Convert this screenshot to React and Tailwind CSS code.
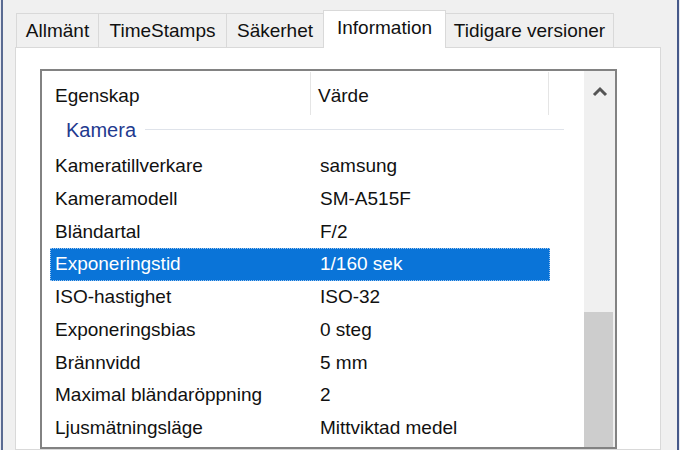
import React from 'react'

const TABS = [
  { label: 'Allmänt', w: 'w-[83px]' },
  { label: 'TimeStamps', w: 'w-[129px]' },
  { label: 'Säkerhet', w: 'w-[98px]' },
  { label: 'Information', w: 'w-[123px]', active: true },
  { label: 'Tidigare versioner', w: 'w-[169px]' },
]

const ROWS = [
  ['Kameratillverkare', 'samsung'],
  ['Kameramodell', 'SM-A515F'],
  ['Bländartal', 'F/2'],
  ['Exponeringstid', '1/160 sek'],
  ['ISO-hastighet', 'ISO-32'],
  ['Exponeringsbias', '0 steg'],
  ['Brännvidd', '5 mm'],
  ['Maximal bländaröppning', '2'],
  ['Ljusmätningsläge', 'Mittviktad medel'],
]

const SELECTED = 3

export default function App() {
  return (
    <div
      className="w-[680px] h-[450px] flex bg-[#f0f0f0] overflow-hidden text-[#111]"
      style={{ fontFamily: '"Liberation Sans", Arial, sans-serif' }}
    >
      {/* window frame, left */}
      <div className="w-[1px] bg-[#e8eaf0]" />
      <div className="w-[2px] bg-[#5a6b92]" />

      <div className="flex-1 flex flex-col pl-[12px] pr-[16px] pt-[10px]">
        {/* Tabs */}
        <div className="flex items-end h-[37px] pl-[1px] relative z-10">
          {TABS.map((t, i) => (
            <div
              key={t.label}
              className={`${t.w} flex items-center justify-center text-[19px] border border-b-0 border-[#d9d9d9] ${
                i > 0 ? '-ml-px' : ''
              } ${
                t.active
                  ? 'h-[38px] -mb-px bg-white relative z-10 pb-[3px]'
                  : 'h-[34px] bg-[#f0f0f0] pt-[2px]'
              }`}
            >
              {t.label}
            </div>
          ))}
        </div>

        {/* Panel */}
        <div className="flex-1 bg-white border border-[#d9d9d9] pt-[21px] pl-[24px] pr-[43px]">
          <div className="h-full border-2 border-[#828282] flex overflow-hidden">
            <div className="flex-1 flex flex-col text-[19px]">
              {/* Column header */}
              <div className="h-[46px] flex items-center pt-[4px]">
                <div className="w-[268px] pl-[13px]">Egenskap</div>
                <div className="w-px h-[43px] bg-[#e5e5e5] self-start -mt-[3px]" />
                <div className="w-[237px] pl-[7px]">Värde</div>
                <div className="w-px h-[43px] bg-[#e5e5e5] self-start -mt-[3px]" />
              </div>

              {/* Group header */}
              <div className="h-[30px] flex items-center pl-[24px] pr-[20px] pb-[4px]">
                <span className="text-[20px] text-[#1f3a8f]">Kamera</span>
                <div className="flex-1 h-px bg-[#dfe3ea] ml-[9px] -mt-[1px]" />
              </div>

              {/* Rows */}
              <div className="pl-[8px] pt-[3px]">
                {ROWS.map(([name, value], i) => {
                  const sel = i === SELECTED
                  return (
                    <div
                      key={name}
                      className={`w-[500px] h-[32.75px] flex items-center ${
                        sel ? 'bg-[#0a74d8] text-white outline-1 outline-dotted outline-[#9ec6f0] -outline-offset-1' : ''
                      }`}
                    >
                      <div className="w-[262px] pl-[5px] whitespace-nowrap">{name}</div>
                      <div className="pl-[8px] whitespace-nowrap">{value}</div>
                    </div>
                  )
                })}
              </div>
            </div>

            {/* Scrollbar */}
            <div className="w-[31px] bg-[#f0f0f0] flex flex-col">
              <div className="h-[40px] flex items-center justify-center pl-[1px]">
                <svg width="16" height="11" viewBox="0 0 16 11">
                  <path d="M2 9 L8 3 L14 9" fill="none" stroke="#555" strokeWidth="3" />
                </svg>
              </div>
              <div className="h-[201px]" />
              <div className="flex-1 bg-[#cdcdcd] mr-[2px]" />
            </div>
          </div>
        </div>
      </div>

      {/* window frame, right */}
      <div className="w-[2px] bg-[#46598a]" />
      <div className="w-[1px] bg-[#e8eaf0]" />
    </div>
  )
}
